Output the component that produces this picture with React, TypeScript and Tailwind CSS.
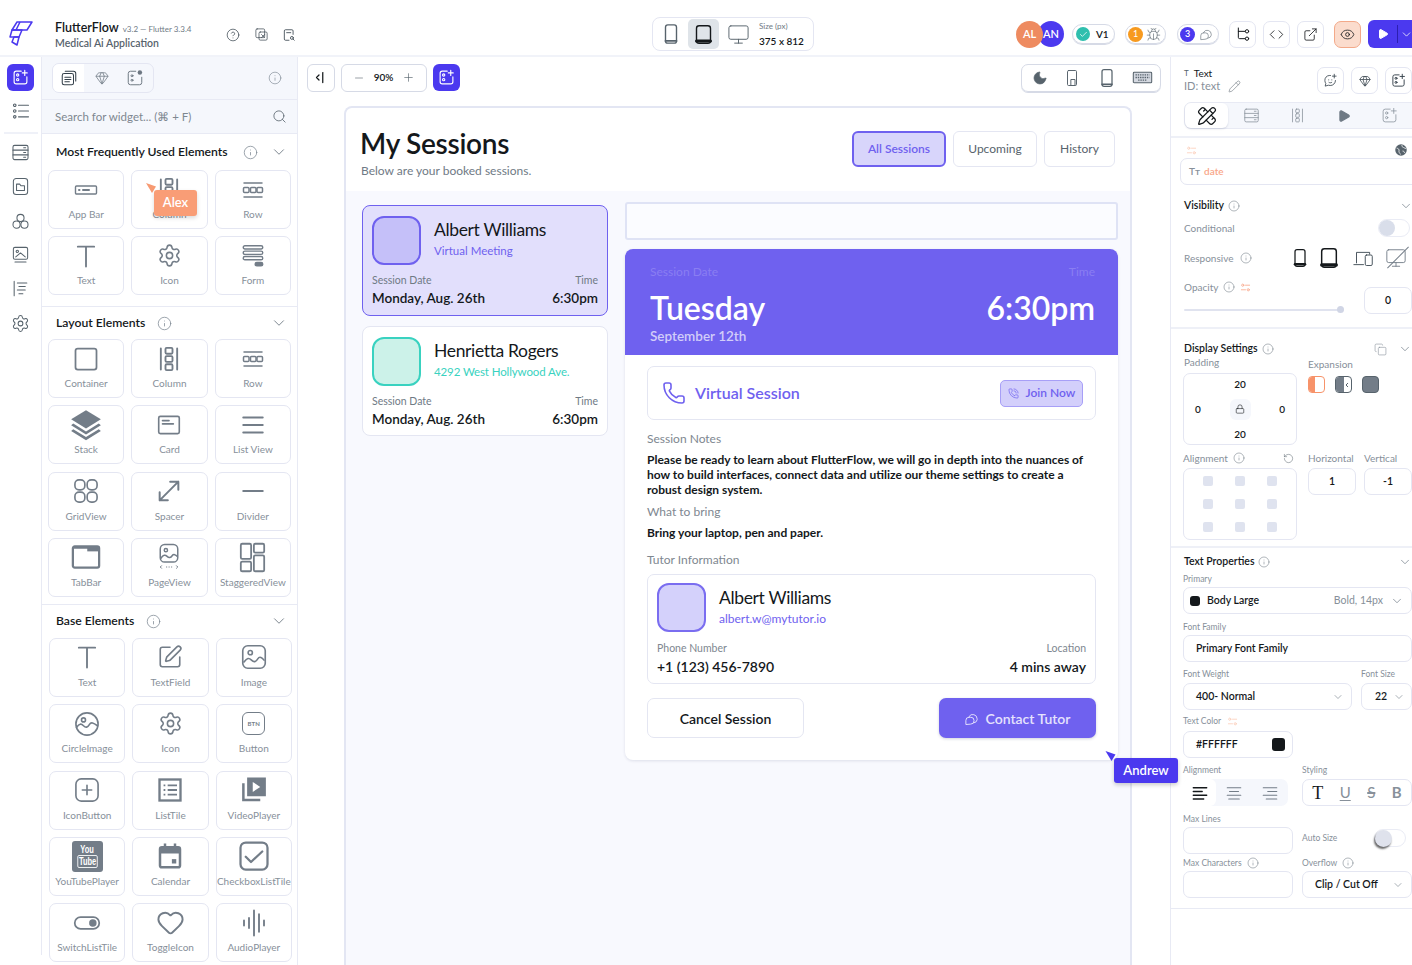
import React from 'react';
import { Settings, ChevronDown, Info, Search, Heart, SquarePen, Moon, Eye, Code, ExternalLink, Pencil, Bug, Check, Play, Lock, RotateCcw, Copy, Phone, PhoneCall, Plus, Minus, Gem, HelpCircle, Monitor, PencilRuler } from 'lucide-react';

const Svg = ({ s = 24, w = 1.5, fill = 'none', children, className = '' }: { s?: number; w?: number; fill?: string; children?: React.ReactNode; className?: string }) => (
  <svg width={s} height={s} viewBox="0 0 24 24" fill={fill} stroke="currentColor" strokeWidth={w} strokeLinecap="round" strokeLinejoin="round" className={className}>{children}</svg>
);

const AddWidget = ({ s = 18, w = 1.6 }: { s?: number; w?: number }) => (
  <Svg s={s} w={w}><path d="M13 3H6a3 3 0 0 0-3 3v12a3 3 0 0 0 3 3h12a3 3 0 0 0 3-3v-7" /><circle cx="8" cy="8.5" r="1.6" /><circle cx="8" cy="15" r="1.6" /><path d="M18 2v7M14.5 5.5h7" /></Svg>
);
const Sliders = ({ s = 14 }: { s?: number }) => (
  <Svg s={s} w={1.8}><circle cx="6" cy="7" r="2.4" /><path d="M12 7h9M3 17h9" /><circle cx="18" cy="17" r="2.4" /></Svg>
);
const PhoneShape = ({ s = 24, dark = false }: { s?: number; dark?: boolean }) => (
  <Svg s={s} w={1.5}><rect x="6" y="2" width="12" height="20" rx="2.5" /><path d="M6 19.5h12" strokeWidth={dark ? 3 : 2} /></Svg>
);
const TabletShape = ({ s = 24 }: { s?: number }) => (
  <Svg s={s} w={1.6}><rect x="4" y="2" width="16" height="20" rx="3" /><path d="M4 19.5h16" strokeWidth={3.5} /></Svg>
);
const ServerStack = ({ s = 18, w = 1.3 }: { s?: number; w?: number }) => (
  <Svg s={s} w={w}><rect x="2.5" y="3" width="19" height="18" rx="2" /><path d="M2.5 9h19M2.5 15h19M16 6h2.500M16 12h2.500M16 18h2.500" /></Svg>
);
const ChatBubbles = ({ s = 15, w = 1.5 }: { s?: number; w?: number }) => (
  <Svg s={s} w={w}><path d="M8 10V9a7 7 0 0 1 13 3.500V14a6 6 0 0 1-5 5" /><path d="M3 21v-6a5 5 0 0 1 5-5h3a5 5 0 0 1 5 5v1a5 5 0 0 1-5 5z" /></Svg>
);
const ChatPlus = ({ s = 15, w = 1.3 }: { s?: number; w?: number }) => (
  <Svg s={s} w={w}><path d="M12 4H10a7.500 7.500 0 0 0-7 8c0 2 .6 3.500 1.500 4.500L3.500 21l5-1.500c1 .3 2 .5 3 .5a8 8 0 0 0 8.500-8" /><path d="M18 2v6M15 5h6" /><path d="M9 11h.2M14 11h.2M9.500 15c1.500 1 3 1 4.500 0" /></Svg>
);

const tT = <Svg s={28} w={1.6}><path d="M5 4h14M12 4v17" /></Svg>;
const tColumn = <Svg s={28} w={1.6}><path d="M5 3v18M19 3v18" /><rect x="9" y="2.5" width="6" height="5" rx="1" /><rect x="9" y="9.5" width="6" height="5" rx="1" /><rect x="9" y="16.5" width="6" height="5" rx="1" /></Svg>;
const tRow = <Svg s={24} w={1.5}><path d="M3 5h18M3 19h18" /><rect x="2.5" y="9.5" width="5.5" height="5" rx="1" /><rect x="9.5" y="9.5" width="5.5" height="5" rx="1" /><rect x="16" y="9.5" width="5.5" height="5" rx="1" /></Svg>;
const tGear = <Settings size={25} strokeWidth={1.5} />;

const frequent: [string, React.ReactNode][] = [
  ['App Bar', <Svg s={24} w={1.4}><rect x="1.5" y="8" width="21" height="8" rx="1" /><path d="M5 12h.5M9 12h6" strokeWidth={2} /></Svg>],
  ['Column', tColumn],
  ['Row', tRow],
  ['Text', tT],
  ['Icon', tGear],
  ['Form', <Svg s={26} w={1.3}><rect x="3" y="2.5" width="18" height="3" rx="1.5" /><rect x="3" y="7.5" width="18" height="3" rx="1.5" /><rect x="3" y="12.5" width="18" height="3" rx="1.5" /><rect x="14" y="18" width="7" height="3" rx="1.5" fill="currentColor" /></Svg>],
];
const layout: [string, React.ReactNode][] = [
  ['Container', <Svg s={28} w={1.5}><rect x="3" y="3" width="18" height="18" rx="2" /></Svg>],
  ['Column', tColumn],
  ['Row', tRow],
  ['Stack', <svg width="34" height="34" viewBox="0 0 24 24" fill="currentColor"><path d="M12 1.5 22.5 8 12 14.5 1.5 8z" /><path d="M3 11l-1.5 1.2L12 18.700l10.5-6.500L21 11l-9 5.500z" /><path d="M3 15l-1.5 1.2L12 22.700l10.5-6.500L21 15l-9 5.500z" /></svg>],
  ['Card', <Svg s={26} w={1.5}><rect x="2.5" y="4" width="19" height="16" rx="1.5" /><path d="M6 8h6M6 11h10" /></Svg>],
  ['List View', <Svg s={26} w={1.8}><path d="M3 5h18M3 12h18M3 19h18" /></Svg>],
  ['GridView', <Svg s={28} w={1.4}><rect x="2.5" y="2.5" width="8.5" height="8.5" rx="3.5" /><rect x="13" y="2.5" width="8.5" height="8.5" rx="3.5" /><rect x="2.5" y="13" width="8.5" height="8.5" rx="3.5" /><rect x="13" y="13" width="8.5" height="8.5" rx="3.5" /></Svg>],
  ['Spacer', <Svg s={28} w={1.7}><path d="M4 20 20 4M13 4h7v7M4 13v7h7" /></Svg>],
  ['Divider', <Svg s={26} w={1.8}><path d="M3 12h18" /></Svg>],
  ['TabBar', <svg width="30" height="30" viewBox="0 0 24 24"><rect x="1.5" y="3.5" width="21" height="17" rx="1.5" fill="none" stroke="currentColor" strokeWidth="1.8" /><path d="M13 3.500h9.500v4H13z" fill="currentColor" /><path d="M1.500 4.500h21" stroke="currentColor" strokeWidth="1.8" /></svg>],
  ['PageView', <Svg s={30} w={1.2}><rect x="5" y="2" width="14" height="14" rx="3.5" /><circle cx="9.5" cy="6.5" r="1.3" /><path d="M5.500 13c2-3 3.500-3 5-1.500s3 1 4-.5 3-1 4 .5" /><path d="M10 20h.2M12 20h.2M14 20h.2M6 19l-1 1 1 1M18 19l1 1-1 1" strokeWidth={0.8} /></Svg>],
  ['StaggeredView', <Svg s={33} w={1.3}><rect x="3.5" y="2" width="7.5" height="11" rx="1" /><rect x="13" y="2" width="7.5" height="6.5" rx="1" /><rect x="3.5" y="15" width="7.5" height="7" rx="1" /><rect x="13" y="10.5" width="7.5" height="11.5" rx="1" /></Svg>],
];
const base: [string, React.ReactNode][] = [
  ['Text', tT],
  ['TextField', <SquarePen size={26} strokeWidth={1.5} />],
  ['Image', <Svg s={30} w={1.3}><rect x="3" y="3" width="18" height="18" rx="4" /><circle cx="9" cy="8.5" r="1.7" /><path d="M4 16c2.500-3.500 4-3.500 6-1.500s3.500 1.500 5-1 3.500-1 5 1" /></Svg>],
  ['CircleImage', <Svg s={28} w={1.4}><circle cx="12" cy="12" r="9.5" /><circle cx="9" cy="8.5" r="1.7" /><path d="M3 15c2.500-3.500 4-3.500 6-1.500s3.500 1.500 5-1 3.500-1.500 7 1" /></Svg>],
  ['Icon', tGear],
  ['Button', <div className="w-[23px] h-[23px] rounded-[6px] border-[1.5px] border-current flex items-center justify-center text-[6px] font-bold leading-none tracking-[0.03em]">BTN</div>],
  ['IconButton', <Svg s={28} w={1.4}><rect x="2.5" y="2.5" width="19" height="19" rx="4.5" /><path d="M12 8v8M8 12h8" /></Svg>],
  ['ListTile', <svg width="28" height="28" viewBox="0 0 24 24" fill="none" stroke="currentColor"><rect x="3" y="3" width="18" height="18" strokeWidth="2" /><path d="M6.500 8h1.500M10 8h8M6.500 12h1.500M10 12h8M6.500 16h1.500M10 16h8" strokeWidth="1.6" /></svg>],
  ['VideoPlayer', <svg width="30" height="30" viewBox="0 0 24 24" fill="currentColor"><path d="M6.500 2h15v15h-15zM11 5.500v8l6-4z" fillRule="evenodd" /><path d="M2.500 6.500h2V19h12.500v2H2.500z" /></svg>],
  ['YouTubePlayer', <div className="w-[31px] h-[31px] rounded-[3px] bg-current flex flex-col items-center justify-center"><span className="text-white text-[10px] font-bold leading-[11px] font-['Liberation_Sans',sans-serif] [transform:scaleX(0.75)]">You</span><span className="text-white text-[10px] font-bold leading-[11px] font-['Liberation_Sans',sans-serif] [transform:scaleX(0.75)] border border-white rounded-[2px] px-[1px]">Tube</span></div>],
  ['Calendar', <svg width="30" height="30" viewBox="0 0 24 24" fill="none" stroke="currentColor"><rect x="4" y="5" width="16" height="16" rx="1.5" strokeWidth="2" /><path d="M4 7.500h16" strokeWidth="5" /><path d="M8 2v3M16 2v3" strokeWidth="2" /><rect x="13.5" y="14.5" width="3.5" height="3.5" fill="currentColor" stroke="none" /></svg>],
  ['CheckboxListTile', <Svg s={36} w={1.5}><rect x="3" y="3" width="18" height="18" rx="3.5" /><path d="M6.500 12.500l3.500 3.500 7.500-7" /></Svg>],
  ['SwitchListTile', <svg width="28" height="28" viewBox="0 0 24 24" fill="none" stroke="currentColor" strokeWidth="1.5"><rect x="1.5" y="7" width="21" height="10" rx="5" /><circle cx="17" cy="12" r="3.2" fill="currentColor" stroke="none" /></svg>],
  ['ToggleIcon', <Heart size={29} strokeWidth={1.6} />],
  ['AudioPlayer', <Svg s={30} w={1.5}><path d="M4 10v4M8 8v8M12 2v20M16 5v14M20 10v4" /></Svg>],
];

const Tile = ({ label, icon }: { label: string; icon: React.ReactNode }) => (
  <div className="h-[59px] rounded-[7px] border border-[#e4e6f2] bg-white flex flex-col items-center overflow-visible text-[#737d88]">
    <div className="h-[37px] w-full flex items-center justify-center shrink-0">{icon}</div>
    <div className="text-[10px] leading-[12px] text-[#87909a] whitespace-nowrap">{label}</div>
  </div>
);

const Grid = ({ items, cls }: { items: [string, React.ReactNode][]; cls: string }) => (
  <div className={cls}>
    {items.map(([l, i], n) => <Tile key={n} label={l} icon={i} />)}
  </div>
);

const SecHead = ({ title, h, infoGap }: { title: string; h: string; infoGap: string }) => (
  <div className={`${h} flex items-center pl-[14px] pr-[9px]`}>
    <span className="text-[12.2px] font-semibold text-[#14181b]">{title}</span>
    <Info size={15} strokeWidth={1.2} className={`${infoGap} text-[#7c8791]`} />
    <ChevronDown size={18} strokeWidth={1.2} className="ml-auto text-[#6f7a85]" />
  </div>
);

const railIcon = 'text-[#57636c]';
const Rail = () => (
  <div className="w-[42px] shrink-0 border-r border-[#e8eaf4] h-[898px] flex flex-col items-center">
    <div className="mt-[7px] w-[27px] h-[27px] rounded-[6px] bg-[#4b39ef] text-white flex items-center justify-center"><AddWidget s={17} /></div>
    <div className={`${railIcon} mt-[10px]`}>
      <Svg s={20} w={1.3}><circle cx="4.500" cy="5" r="1.5" /><circle cx="4.500" cy="12" r="1.5" /><circle cx="4.500" cy="19" r="1.5" /><path d="M9 5h12M9 12h12M9 19h12" /></Svg>
    </div>
    <div className="mt-[11px] w-[34px] h-[2px] bg-[#eff1f8]" />
    <div className={`${railIcon} mt-[9px]`}><ServerStack s={19} /></div>
    <div className={`${railIcon} mt-[15px]`}>
      <Svg s={19} w={1.3}><rect x="3" y="2" width="18" height="20" rx="3.5" /><path d="M7 9h4l1.500 2H17v6H7z" /></Svg>
    </div>
    <div className={`${railIcon} mt-[16px]`}>
      <Svg s={19} w={1.3}><circle cx="12" cy="7.500" r="4.5" /><circle cx="7" cy="16" r="4.5" /><circle cx="17" cy="16" r="4.5" /></Svg>
    </div>
    <div className={`${railIcon} mt-[14px]`}>
      <Svg s={19} w={1.3}><rect x="3" y="3" width="18" height="15" rx="2" /><circle cx="8" cy="8" r="1.5" /><path d="M6 15l6-5 6 5M5 21.500h14" /></Svg>
    </div>
    <div className={`${railIcon} mt-[15px]`}>
      <Svg s={19} w={1.3}><path d="M4 3v18M8 5h12M10 9.500h8M8 14h10M10 18.500h5" /></Svg>
    </div>
    <div className={`${railIcon} mt-[16px]`}><Settings size={19} strokeWidth={1.3} /></div>
  </div>
);

const WidgetPanel = () => (
  <div className="w-[256px] shrink-0 border-r border-[#e8eaf4] flex flex-col">
    <div className="h-[43px] shrink-0 bg-[#f5f7fc] border-b border-[#e8eaf4] flex items-center pl-[10px] pr-[15px]">
      <div className="w-[102px] h-[30px] rounded-[7px] border border-[#e4e6f2] flex items-center overflow-hidden">
        <div className="w-[31px] h-[28px] bg-white flex items-center justify-center text-[#34404a]">
          <Svg s={18} w={1.4}><rect x="3" y="6" width="15" height="15" rx="2.5" /><path d="M7 3h11a3 3 0 0 1 3 3v10M6.500 11h8M6.500 14h8M6.500 17h6" /></Svg>
        </div>
        <div className="w-[36px] flex justify-center text-[#6d7782]"><Gem size={14} strokeWidth={1.3} /></div>
        <div className="w-[30px] flex justify-center text-[#6d7782]">
          <Svg s={18} w={1.3}><path d="M13 3H6a3 3 0 0 0-3 3v12a3 3 0 0 0 3 3h12a3 3 0 0 0 3-3v-7" /><circle cx="8" cy="9" r="1.3" /><circle cx="8" cy="15" r="1.3" /><circle cx="18.500" cy="4.500" r="3" fill="currentColor" stroke="none" /></Svg>
        </div>
      </div>
      <Info size={14} strokeWidth={1.1} className="ml-auto text-[#7c8791]" />
    </div>
    <div className="h-[34px] shrink-0 bg-[#f5f7fc] border-b border-[#e8eaf4] flex items-center pl-[13px] pr-[10px]">
      <span className="text-[11.5px] text-[#7e8790]">Search for widget... (⌘ + F)</span>
      <Search size={15} strokeWidth={1.3} className="ml-auto text-[#57636c]" />
    </div>
    <div className="border-b border-[#e8eaf4] shrink-0">
      <SecHead title="Most Frequently Used Elements" h="h-[36px]" infoGap="ml-[15px]" />
      <Grid items={frequent} cls="grid grid-cols-3 gap-x-[7px] gap-y-[7px] pl-[6px] pr-[6px] pb-[11px]" />
    </div>
    <div className="border-b border-[#e8eaf4] shrink-0">
      <SecHead title="Layout Elements" h="h-[32px]" infoGap="ml-[12px]" />
      <Grid items={layout} cls="grid grid-cols-3 gap-x-[7px] gap-y-[7.33px] pl-[6px] pr-[6px] pb-[7px]" />
    </div>
    <div className="shrink-0">
      <SecHead title="Base Elements" h="h-[33px]" infoGap="ml-[12px]" />
      <Grid items={base} cls="grid grid-cols-3 gap-x-[7px] gap-y-[7.3px] pl-[7px] pr-[5px]" />
    </div>
  </div>
);

const Avatar = ({ bg, border }: { bg: string; border: string }) => (
  <div className={`w-[49px] h-[49px] shrink-0 rounded-[12px] border-2 ${bg} ${border}`} />
);

const SessionCard = ({ active, name, sub }: { active?: boolean; name: string; sub: string }) => (
  <div className={`w-[246px] rounded-[8px] border px-[9px] pt-[10px] ${active ? 'h-[111px] bg-[#e2dffc] border-[#6f61ef]' : 'h-[110px] bg-white border-[#e4e6f2]'}`}>
    <div className="flex">
      <Avatar bg={active ? 'bg-[#c5c0f9]' : 'bg-[#ccf2e9]'} border={active ? 'border-[#6f61ef]' : 'border-[#39d2c0]'} />
      <div className="ml-[13px] mt-[2px]">
        <div className="text-[17.5px] leading-[24px] text-[#14181b] tracking-[-0.02em] whitespace-nowrap">{name}</div>
        <div className={`mt-[1px] text-[11.5px] leading-[15px] whitespace-nowrap ${active ? 'text-[#6f61ef]' : 'text-[#39d2c0] tracking-[-0.01em]'}`}>{sub}</div>
      </div>
    </div>
    <div className="flex justify-between mt-[8px] text-[10.5px] leading-[14px] text-[#6f7a85]"><span>Session Date</span><span>Time</span></div>
    <div className="flex justify-between mt-[2px] text-[13.5px] leading-[18px] font-semibold text-[#14181b]"><span>Monday, Aug. 26th</span><span>6:30pm</span></div>
  </div>
);

const Detail = () => (
  <div className="w-[493px] h-[511px] rounded-[8px] bg-white shadow-[0_1px_3px_rgba(30,40,90,0.12)] overflow-hidden">
    <div className="h-[106px] bg-[#6f61ef] pl-[25px] pr-[23px] pt-[15px]">
      <div className="flex justify-between text-[12px] leading-[16px] text-[#8a7ef2]"><span>Session Date</span><span>Time</span></div>
      <div className="flex justify-between mt-[7px] text-[32px] leading-[42px] font-semibold text-white"><span>Tuesday</span><span>6:30pm</span></div>
      <div className="-mt-[1px] text-[13.5px] leading-[17px] font-semibold text-[#d2cdf9]">September 12th</div>
    </div>
    <div className="px-[22px] pt-[11px]">
      <div className="h-[54px] rounded-[7px] border border-[#e4e6f2] flex items-center pl-[14px] pr-[12px]">
        <Phone size={24} strokeWidth={1.6} className="text-[#6f61ef]" />
        <span className="ml-[9px] text-[16px] font-semibold text-[#6f61ef]">Virtual Session</span>
        <div className="ml-auto w-[83px] h-[27px] rounded-[5px] bg-[#d3cffb] border-[1.5px] border-[#a79ff7] flex items-center justify-center gap-[7px]">
          <PhoneCall size={11} strokeWidth={1.5} className="text-[#6f61ef]" />
          <span className="text-[12px] font-semibold text-[#6f61ef]">Join Now</span>
        </div>
      </div>
      <div className="mt-[11px] text-[12px] leading-[16px] text-[#7e8790]">Session Notes</div>
      <div className="mt-[5px] text-[12px] leading-[15px] font-bold text-[#14181b]">Please be ready to learn about FlutterFlow, we will go in depth into the nuances of how to build interfaces, connect data and utilize our theme settings to create a robust design system.</div>
      <div className="mt-[7px] text-[12px] leading-[16px] text-[#7e8790]">What to bring</div>
      <div className="mt-[5px] text-[12px] leading-[16px] font-bold text-[#14181b]">Bring your laptop, pen and paper.</div>
      <div className="mt-[11px] text-[12px] leading-[16px] text-[#7e8790]">Tutor Information</div>
      <div className="mt-[6px] h-[110px] rounded-[7px] border border-[#e4e6f2] px-[9px] pt-[8px]">
        <div className="flex">
          <Avatar bg="bg-[#d4d1fb]" border="border-[#7a6df0]" />
          <div className="ml-[13px] mt-[3px]">
            <div className="text-[17.5px] leading-[24px] text-[#14181b] tracking-[-0.02em]">Albert Williams</div>
            <div className="mt-[1px] text-[12px] leading-[15px] text-[#6f61ef]">albert.w@mytutor.io</div>
          </div>
        </div>
        <div className="flex justify-between mt-[9px] text-[10.5px] leading-[14px] text-[#7e8790]"><span>Phone Number</span><span>Location</span></div>
        <div className="flex justify-between mt-[3px] text-[14px] leading-[18px] font-semibold text-[#14181b]"><span>+1 (123) 456-7890</span><span>4 mins away</span></div>
      </div>
      <div className="flex justify-between mt-[14px]">
        <div className="w-[157px] h-[40px] rounded-[7px] border border-[#e4e6f2] flex items-center justify-center text-[14px] font-semibold text-[#14181b]">Cancel Session</div>
        <div className="w-[157px] h-[40px] rounded-[7px] bg-[#6f61ef] shadow-[0_1px_3px_rgba(30,40,90,0.2)] flex items-center justify-center gap-[6px] text-[14px] font-semibold text-[#e6e3fd]">
          <ChatBubbles s={15} /><span>Contact Tutor</span>
        </div>
      </div>
    </div>
  </div>
);

const Canvas = () => (
  <div className="w-[872px] shrink-0 flex flex-col">
    <div className="h-[49px] pb-[8px] shrink-0 flex items-center pl-[9px] pr-[9px]">
      <div className="w-[28px] h-[28px] rounded-[6px] border border-[#d6dae6] flex items-center justify-center text-[#14181b]">
        <Svg s={15} w={2}><path d="M8 8l-4 4 4 4" /><path d="M14 4v16" /></Svg>
      </div>
      <div className="ml-[6px] w-[86px] h-[28px] rounded-[6px] border border-[#d6dae6] flex items-center justify-between px-[11px] text-[#57636c]">
        <Minus size={12} strokeWidth={1.2} /><span className="text-[10px] font-semibold text-[#14181b]">90%</span><Plus size={13} strokeWidth={1.2} />
      </div>
      <div className="ml-[6px] w-[27px] h-[27px] rounded-[6px] bg-[#4b39ef] text-white flex items-center justify-center"><AddWidget s={17} /></div>
      <div className="ml-auto w-[140px] h-[28px] rounded-[7px] border border-[#d6dae6] shadow-[0_1px_0_#d6dae6] flex items-center justify-between pl-[10px] pr-[7px] text-[#57636c]">
        <Moon size={16} fill="currentColor" strokeWidth={1} />
        <Svg s={18} w={1.3}><rect x="6" y="2" width="12" height="20" rx="1.5" /><rect x="11" y="14" width="5" height="8" /></Svg>
        <PhoneShape s={20} />
        <Svg s={21} w={1.2}><rect x="1.500" y="6" width="21" height="12" rx="1" fill="#d4d8e0" /><path d="M4 9h16M4 12h16M7 15h10" strokeWidth={1.6} strokeDasharray="1.6 1" strokeLinecap="butt" /></Svg>
      </div>
    </div>
    <div className="ml-[46px] w-[788px] flex-1 rounded-t-[8px] border-x-2 border-t-2 border-[#e3e6f3] bg-[#f8f9fe] overflow-hidden">
      <div className="h-[83px] bg-white rounded-t-[6px] pl-[14px] pr-[15px] flex">
        <div className="pt-[18px]">
          <div className="text-[28px] leading-[34px] font-semibold text-[#14181b] tracking-[-0.01em]">My Sessions</div>
          <div className="mt-[3px] ml-[1px] text-[12px] leading-[16px] text-[#6f7a85]">Below are your booked sessions.</div>
        </div>
        <div className="ml-auto mt-[23px] flex gap-[7px] h-[36px]">
          <div className="w-[94px] rounded-[6px] bg-[#d8d5fb] border-2 border-[#6f61ef] flex items-center justify-center text-[12px] font-semibold text-[#6f61ef]">All Sessions</div>
          <div className="w-[84px] rounded-[6px] border border-[#e4e6f2] flex items-center justify-center text-[12px] text-[#57636c]">Upcoming</div>
          <div className="w-[71px] rounded-[6px] border border-[#e4e6f2] flex items-center justify-center text-[12px] text-[#57636c]">History</div>
        </div>
      </div>
      <div className="flex pl-[16px]">
        <div className="pt-[14px] flex flex-col gap-[10px]">
          <SessionCard active name="Albert Williams" sub="Virtual Meeting" />
          <SessionCard name="Henrietta Rogers" sub="4292 West Hollywood Ave." />
        </div>
        <div className="ml-[17px] pt-[11px]">
          <div className="w-[493px] h-[38px] rounded-[3px] border-2 border-[#dfe3f5] bg-[#fbfcff]" />
          <div className="mt-[9px]"><Detail /></div>
        </div>
      </div>
    </div>
  </div>
);

const Lbl = ({ children, cls = '' }: { children: React.ReactNode; cls?: string }) => (
  <div className={`text-[8.5px] leading-[10px] text-[#87909a] whitespace-nowrap ${cls}`}>{children}</div>
);
const Lbl2 = ({ children, cls = '' }: { children: React.ReactNode; cls?: string }) => (
  <div className={`text-[10px] leading-[12px] text-[#87909a] whitespace-nowrap ${cls}`}>{children}</div>
);
const Box = ({ children, cls = '' }: { children?: React.ReactNode; cls?: string }) => (
  <div className={`rounded-[7px] border border-[#e4e6f2] flex items-center text-[10.5px] font-semibold text-[#14181b] ${cls}`}>{children}</div>
);
const SmallInfo = ({ cls = '' }: { cls?: string }) => <Info size={12} strokeWidth={1.1} className={`text-[#6f7a85] ${cls}`} />;
const Chev = ({ cls = '', s = 14 }: { cls?: string; s?: number }) => <ChevronDown size={s} strokeWidth={1.2} className={`text-[#6f7a85] ${cls}`} />;

const IconBtn = ({ children, cls = '' }: { children: React.ReactNode; cls?: string }) => (
  <div className={`w-[27px] h-[27px] rounded-[7px] border border-[#e4e6f2] flex items-center justify-center text-[#34404a] ${cls}`}>{children}</div>
);

const RightPanel = () => (
  <div className="w-[242px] shrink-0 border-l border-[#e8eaf4] overflow-hidden">
    <div className="w-[260px]">
      <div className="h-[45px] pl-[13px] flex items-start pt-[10px]">
        <div className="w-[133px] shrink-0">
          <div className="flex items-center text-[10px] leading-[12px] text-[#14181b]"><span className="text-[8px] mr-[5px] text-[#57636c]">T</span>Text</div>
          <div className="flex items-center text-[11px] leading-[14px] text-[#87909a] whitespace-nowrap">ID: text<Pencil size={13} strokeWidth={1} className="ml-[8px] text-[#57636c]" /></div>
        </div>
        <div className="flex gap-[7px]">
          <IconBtn><ChatPlus s={15} /></IconBtn>
          <IconBtn><Gem size={12} strokeWidth={1.5} /></IconBtn>
          <IconBtn><AddWidget s={15} w={1.5} /></IconBtn>
        </div>
      </div>
      <div className="ml-[13px] w-[240px] h-[27px] rounded-[7px] bg-[#f5f7fc] border border-[#e8eaf4] flex items-center text-[#87909a]">
        <div className="w-[43px] h-[25px] bg-white rounded-[6px] shadow-[0_1px_2px_rgba(30,40,90,0.15)] flex items-center justify-center text-[#14181b]">
          <PencilRuler size={20} strokeWidth={1.5} />
        </div>
        <div className="w-[47px] flex justify-center"><ServerStack s={17} w={1.1} /></div>
        <div className="w-[45px] flex justify-center"><Svg s={17} w={1.1}><path d="M5 3v18M19 3v18" /><rect x="9.500" y="3" width="5" height="5" rx="1" /><rect x="9.500" y="9.500" width="5" height="5" rx="1" /><rect x="9.500" y="16" width="5" height="5" rx="1" /></Svg></div>
        <div className="w-[47px] flex justify-center text-[#6f7a85]"><Play size={14} fill="currentColor" /></div>
        <div className="w-[44px] flex justify-center"><AddWidget s={17} w={1.1} /></div>
      </div>
      <div className="mt-[7px] h-[2px] bg-[#eef0f7]" />
      <div className="pt-[4px] pl-[15px] pr-[24px] flex items-center justify-between h-[20px]">
        <span className="text-[#fbcdb8]"><Sliders s={11} /></span>
        <svg width="12" height="12" viewBox="0 0 24 24" fill="#57636c" stroke="#fff" strokeWidth="1.5"><circle cx="12" cy="12" r="11.500" stroke="none" /><path d="M3 8c4 1 6 3 5 6s2 4 3 7M14 2c-1 3 1 4 3 5s4 2 5 2M15 14c2 0 4 1 4 4" fill="none" /></svg>
      </div>
      <div className="ml-[9px] w-[240px] h-[27px] rounded-[7px] border border-[#e4e6f2] flex items-center pl-[8px] text-[10px] font-semibold">
        <span className="text-[#87909a] mr-[4px]">Tт</span><span className="text-[#f9a78a]">date</span>
      </div>
      <div className="h-[34px] pt-[7px] pl-[13px] pr-[18px] flex items-center">
        <span className="text-[10.5px] font-semibold text-[#14181b]">Visibility</span><SmallInfo cls="ml-[4px]" /><Chev cls="ml-auto" />
      </div>
      <div className="h-[18px] pl-[13px] pr-[21px] flex items-center">
        <Lbl2>Conditional</Lbl2>
        <div className="ml-auto w-[32px] h-[18px] rounded-full border border-[#eaecf5] flex items-center"><div className="w-[16px] h-[16px] rounded-full bg-[#d9deea]" /></div>
      </div>
      <div className="mt-[11px] h-[20px] pl-[13px] flex items-center text-[#14181b]">
        <Lbl2>Responsive</Lbl2><SmallInfo cls="ml-[7px]" />
        <div className="ml-[38px]"><PhoneShape s={20} dark /></div>
        <div className="ml-[8px]"><TabletShape s={22} /></div>
        <div className="ml-[13px] text-[#34404a]"><Svg s={21} w={1}><path d="M4 17V5h15v2M1 19h11" /><rect x="14" y="8" width="8" height="12" rx="1.5" /></Svg></div>
        <div className="ml-[11px] text-[#737d88] relative"><Monitor size={22} strokeWidth={1} /><div className="absolute left-[-2px] top-[10px] w-[30px] h-[1px] bg-[#737d88] [transform:rotate(-45deg)]" /></div>
      </div>
      <div className="h-[32px] pl-[13px] flex items-start mt-[13px]">
        <div className="w-[180px]">
          <div className="flex items-center"><Lbl2>Opacity</Lbl2><SmallInfo cls="ml-[5px]" /><span className="ml-[5px] text-[#f9a78a]"><Sliders s={11} /></span></div>
          <div className="mt-[16px] w-[160px] h-[2px] bg-[#e0e3ef] rounded relative"><div className="absolute right-0 top-[-3px] w-[7px] h-[7px] rounded-full bg-[#d0d5e5]" /></div>
        </div>
        <Box cls="mt-[6px] w-[48px] h-[27px] justify-center">0</Box>
      </div>
      <div className="mt-[14px] h-[2px] bg-[#eef0f7]" />
      <div className="pl-[12px] pt-[13px]">
        <div className="h-[14px] w-[229px] flex items-center pl-[1px]">
          <span className="text-[10.5px] font-semibold text-[#14181b]">Display Settings</span><SmallInfo cls="ml-[4px]" />
          <Copy size={13} strokeWidth={1.1} className="ml-auto mr-[11px] text-[#87909a]" /><Chev />
        </div>
        <div className="flex">
          <div className="w-[114px]">
            <Lbl2 cls="pl-[1px]">Padding</Lbl2>
            <div className="mt-[5px] h-[72px] rounded-[7px] border border-[#e4e6f2] flex flex-col items-center justify-between py-[4px] text-[10px] font-semibold text-[#14181b]">
              <span className="leading-[12px]">20</span>
              <div className="flex items-center justify-between w-full px-[11px]">
                <span>0</span>
                <div className="w-[21px] h-[21px] rounded-[6px] bg-[#f5f7fc] flex items-center justify-center"><Lock size={10} strokeWidth={1.4} /></div>
                <span>0</span>
              </div>
              <span className="leading-[12px]">20</span>
            </div>
          </div>
          <div className="ml-[11px] pt-[2px]">
            <Lbl2>Expansion</Lbl2>
            <div className="flex gap-[10px] mt-[6px]">
              <div className="w-[17px] h-[17px] rounded-[4px] border-[1.5px] border-[#f7936a] flex overflow-hidden"><div className="w-[6px] bg-[#f7936a]" /></div>
              <div className="w-[17px] h-[17px] rounded-[4px] border-[1.5px] border-[#57636c] flex items-center overflow-hidden"><div className="w-[8px] h-full bg-[#737d88]" /><svg width="6" height="8" viewBox="0 0 6 8" fill="none" stroke="#57636c"><path d="M4 2 2 4l2 2" /></svg></div>
              <div className="w-[17px] h-[17px] rounded-[4px] border-[1.5px] border-[#57636c] bg-[#737d88]" />
            </div>
          </div>
        </div>
        <div className="flex mt-[7px]">
          <div className="w-[114px]">
            <div className="flex items-center h-[12px]"><Lbl2>Alignment</Lbl2><SmallInfo cls="ml-[5px]" /><RotateCcw size={11} strokeWidth={1.1} className="ml-auto mr-[3px] text-[#57636c]" /></div>
            <div className="mt-[4px] h-[72px] rounded-[7px] border border-[#e4e6f2] grid grid-cols-3 place-items-center px-[8px] py-[1px]">
              {[0, 1, 2, 3, 4, 5, 6, 7, 8].map((n) => <div key={n} className="w-[10px] h-[10px] rounded-[2px] bg-[#dfe3ef]" />)}
            </div>
          </div>
          <div className="ml-[11px]">
            <div className="flex h-[12px]"><Lbl2 cls="w-[56px]">Horizontal</Lbl2><Lbl2>Vertical</Lbl2></div>
            <div className="mt-[4px] flex gap-[8px]">
              <Box cls="w-[48px] h-[27px] justify-center">1</Box>
              <Box cls="w-[48px] h-[27px] justify-center">-1</Box>
            </div>
          </div>
        </div>
      </div>
      <div className="mt-[6px] h-[2px] bg-[#eef0f7]" />
      <div className="pl-[12px] w-[241px]">
        <div className="h-[26px] pt-[1px] flex items-center pl-[1px]">
          <span className="text-[10.5px] font-semibold text-[#14181b]">Text Properties</span><SmallInfo cls="ml-[4px]" /><Chev cls="ml-auto" />
        </div>
        <Lbl>Primary</Lbl>
        <Box cls="mt-[3px] w-[229px] h-[27px] pl-[6px] pr-[7px]">
          <div className="w-[10px] h-[10px] rounded-[3px] bg-[#14181b] mr-[7px]" />
          <span>Body Large</span>
          <span className="ml-auto font-normal text-[#87909a]">Bold, 14px</span><Chev cls="ml-[7px]" />
        </Box>
        <Lbl cls="mt-[8px]">Font Family</Lbl>
        <Box cls="mt-[3px] w-[229px] h-[27px] pl-[12px]">Primary Font Family</Box>
        <div className="flex mt-[7px] gap-[9px]">
          <div className="w-[169px]">
            <Lbl>Font Weight</Lbl>
            <Box cls="mt-[4px] h-[27px] pl-[12px] pr-[7px] justify-between">400- Normal<Chev s={12} /></Box>
          </div>
          <div className="w-[51px]">
            <Lbl>Font Size</Lbl>
            <Box cls="mt-[4px] h-[27px] pl-[13px] pr-[6px] justify-between">22<Chev s={12} /></Box>
          </div>
        </div>
        <div className="flex items-center h-[10px] mt-[6px]"><Lbl>Text Color</Lbl><span className="ml-[6px] text-[#fbcdb8]"><Sliders s={11} /></span></div>
        <Box cls="mt-[5px] w-[110px] h-[27px] pl-[12px] pr-[7px] justify-between">#FFFFFF<div className="w-[13px] h-[13px] rounded-[3px] bg-[#14181b]" /></Box>
        <div className="flex mt-[7px]">
          <div className="w-[119px]">
            <Lbl>Alignment</Lbl>
            <div className="mt-[4px] w-[105px] h-[27px] rounded-[7px] bg-[#f5f7fc] flex text-[#737d88]">
              <div className="w-[33px] h-[27px] rounded-[6px] bg-white flex items-center justify-center text-[#14181b]"><Svg s={18} w={1.7}><path d="M3 5h18M3 10h12M3 15h18M3 20h14" /></Svg></div>
              <div className="w-[36px] flex items-center justify-center"><Svg s={18} w={1.5}><path d="M3 5h18M6 10h12M3 15h18M5 20h14" /></Svg></div>
              <div className="w-[36px] flex items-center justify-center"><Svg s={18} w={1.5}><path d="M3 5h18M9 10h12M3 15h18M7 20h14" /></Svg></div>
            </div>
          </div>
          <div className="w-[110px]">
            <Lbl>Styling</Lbl>
            <Box cls="mt-[4px] h-[27px] justify-around text-[15px] text-[#87909a] px-[1px]">
              <span className="text-[18px] font-['Liberation_Serif',serif] font-normal text-[#14181b] leading-none">T</span>
              <span className="underline underline-offset-2 font-normal">U</span>
              <span className="line-through decoration-[1.5px] font-normal">S</span>
              <span className="font-bold">B</span>
            </Box>
          </div>
        </div>
        <div className="flex mt-[8px]">
          <div className="w-[119px]">
            <Lbl>Max Lines</Lbl>
            <Box cls="mt-[3px] w-[110px] h-[27px]" />
          </div>
          <div className="flex items-center h-[32px] mt-[8px]">
            <Lbl>Auto Size</Lbl>
            <div className="ml-[37px] w-[32px] h-[18px] rounded-full border border-[#eaecf5] flex items-center"><div className="w-[17px] h-[17px] rounded-full bg-[#dfe2ec] shadow-[-1px_2px_2px_rgba(0,0,0,0.6)]" /></div>
          </div>
        </div>
        <div className="flex mt-[3px]">
          <div className="w-[119px]">
            <div className="flex items-center h-[12px]"><Lbl>Max Characters</Lbl><SmallInfo cls="ml-[5px]" /></div>
            <Box cls="mt-[2px] w-[110px] h-[27px]" />
          </div>
          <div className="w-[110px]">
            <div className="flex items-center h-[12px]"><Lbl>Overflow</Lbl><SmallInfo cls="ml-[5px]" /></div>
            <Box cls="mt-[2px] h-[27px] pl-[12px] pr-[7px] justify-between">Clip / Cut Off<Chev s={12} /></Box>
          </div>
        </div>
      </div>
      <div className="mt-[10px] h-[1px] bg-[#e8eaf4]" />
    </div>
  </div>
);

const Header = () => (
  <div className="h-[55px] shrink-0 flex items-center bg-white">
    <div className="ml-[9px] w-[24px] shrink-0 text-[#4b39ef] mt-[12px]">
      <svg width="24" height="26" viewBox="0 0 24 26" fill="none" stroke="currentColor" strokeWidth="1.5" strokeLinejoin="round"><path d="M8 1h15l-5 8H3z" /><path d="M11 1 7 9" /><path d="M3 9h10l-3 7H1z" /><path d="M5 16h5l-2 8-5-3z" /></svg>
    </div>
    <div className="ml-[22px] w-[170px] shrink-0 mt-[16px]">
      <div className="flex items-baseline whitespace-nowrap"><span className="text-[12.5px] leading-[16px] font-semibold text-[#14181b]">FlutterFlow</span><span className="ml-[4px] text-[8px] leading-[12px] text-[#6f7a85]">v3.2 — Flutter 3.3.4</span></div>
      <div className="text-[10.5px] leading-[15px] font-semibold text-[#57636c] whitespace-nowrap">Medical Ai Application</div>
    </div>
    <div className="ml-[1px] shrink-0 mt-[14px] flex items-center text-[#34404a]">
      <HelpCircle size={14} strokeWidth={1.2} />
      <span className="ml-[14px]"><Svg s={15} w={1.1}><rect x="3" y="3" width="14" height="14" rx="2" /><rect x="8" y="8" width="13" height="13" rx="2" /><path d="M12 12l5 5M17 12l-5 5" /></Svg></span>
      <span className="ml-[13px]"><Svg s={14} w={1.4}><path d="M19 11V5a2 2 0 0 0-2-2H6a2 2 0 0 0-2 2v14a2 2 0 0 0 2 2h6M8 8h7" /><circle cx="17" cy="17" r="2.5" /><path d="M19 19l2 2" /></Svg></span>
    </div>
    <div className="ml-[356px] shrink-0 mt-[13px] w-[162px] h-[34px] rounded-[8px] border border-[#e4e6f2] flex items-center pl-[3px]">
      <div className="w-[29px] flex justify-center text-[#57636c]"><PhoneShape s={22} /></div>
      <div className="ml-[3px] w-[31px] h-[30px] rounded-[5px] bg-[#dfe4e9] flex items-center justify-center text-[#14181b]"><TabletShape s={21} /></div>
      <div className="w-[38px] flex justify-center text-[#57636c]"><Monitor size={23} strokeWidth={1} /></div>
      <div className="ml-[2px]">
        <div className="text-[8px] leading-[12px] text-[#6f7a85]">Size (px)</div>
        <div className="mt-[2px] text-[10px] leading-[14px] font-semibold text-[#14181b] whitespace-nowrap">375 x 812</div>
      </div>
    </div>
    <div className="ml-[202px] shrink-0 mt-[13px] flex items-center">
      <div className="w-[27px] h-[27px] rounded-full bg-[#ee8b60] flex items-center justify-center text-[11px] font-semibold text-white z-10">AL</div>
      <div className="-ml-[5px] w-[26px] h-[26px] rounded-full bg-[#4b39ef] flex items-center justify-center text-[11px] font-semibold text-white">AN</div>
      <div className="ml-[8px] w-[43px] h-[20px] rounded-full border border-[#d6dae6] shadow-[0_1px_0_#d6dae6] flex items-center pl-[3px]">
        <div className="w-[14px] h-[14px] rounded-full bg-[#2fbfae] flex items-center justify-center text-white"><Check size={9} strokeWidth={2} /></div>
        <span className="ml-[6px] text-[10px] font-semibold text-[#14181b]">V1</span>
      </div>
      <div className="ml-[10px] w-[41px] h-[20px] rounded-full border border-[#d6dae6] shadow-[0_1px_0_#d6dae6] flex items-center pl-[2px]">
        <div className="w-[15px] h-[15px] rounded-full bg-[#f79a1f] flex items-center justify-center text-[9px] text-white">1</div>
        <Bug size={15} strokeWidth={1} className="ml-[3px] text-[#57636c]" />
      </div>
      <div className="ml-[11px] w-[42px] h-[20px] rounded-full border border-[#d6dae6] shadow-[0_1px_0_#d6dae6] flex items-center pl-[2px]">
        <div className="w-[15px] h-[15px] rounded-full bg-[#4b39ef] flex items-center justify-center text-[9px] font-semibold text-white">3</div>
        <span className="ml-[4px] text-[#57636c]"><ChatBubbles s={14} w={1} /></span>
      </div>
      <div className="ml-[10px] w-[27px] h-[27px] rounded-[7px] border border-[#e4e6f2] flex items-center justify-center text-[#14181b]">
        <Svg s={16} w={1.5}><path d="M5 3v14a2 2 0 0 0 2 2h8M5 8h10" /><circle cx="18" cy="8" r="2.5" /><circle cx="18" cy="19" r="2.5" /></Svg>
      </div>
      <div className="ml-[7px] w-[27px] h-[27px] rounded-[7px] border border-[#e4e6f2] flex items-center justify-center text-[#14181b]"><Code size={15} strokeWidth={1.3} /></div>
      <div className="ml-[7px] w-[27px] h-[27px] rounded-[7px] border border-[#e4e6f2] flex items-center justify-center text-[#14181b]"><ExternalLink size={15} strokeWidth={1.3} /></div>
      <div className="ml-[10px] w-[27px] h-[27px] rounded-[7px] border border-[#f3a989] bg-[#fbdccd] flex items-center justify-center text-[#14181b]"><Eye size={15} strokeWidth={1.3} /></div>
      <div className="ml-[7px] w-[50px] h-[28px] rounded-[6px] bg-[#4b39ef] flex items-center text-white shrink-0">
        <div className="w-[29px] flex justify-center"><Play size={12} fill="currentColor" /></div>
        <div className="w-[1px] h-[18px] bg-[#2c1fb0]" />
        <ChevronDown size={13} strokeWidth={1.4} className="ml-[2px]" />
      </div>
    </div>
  </div>
);

export default function App() {
  return (
    <div className="relative w-[1412px] h-[965px] overflow-hidden bg-white flex flex-col font-['Lato','Noto_Sans',sans-serif]">
      <Header />
      <div className="h-[2px] shrink-0 bg-[#f1f3f9]" />
      <div className="flex h-[908px]">
        <Rail />
        <WidgetPanel />
        <Canvas />
        <RightPanel />
      </div>
      <svg className="absolute left-[146px] top-[183px]" width="10" height="11" viewBox="0 0 10 11" fill="#f79a72"><path d="M0 0 10 3.500 6 10z" /></svg>
      <div className="absolute left-[154px] top-[190px] w-[43px] h-[26px] rounded-[3px] bg-[#f99d76] shadow-[0_2px_4px_rgba(0,0,0,0.15)] flex items-center justify-center text-[13px] font-semibold text-white">Alex</div>
      <svg className="absolute left-[1105px] top-[751px]" width="11" height="11" viewBox="0 0 10 11" fill="#4b39ef"><path d="M0 0 10 3.500 6 10z" /></svg>
      <div className="absolute left-[1114px] top-[758px] w-[64px] h-[25px] rounded-[3px] bg-[#4b39ef] shadow-[0_2px_4px_rgba(0,0,0,0.2)] flex items-center justify-center text-[13px] font-semibold text-white">Andrew</div>
    </div>
  );
}
